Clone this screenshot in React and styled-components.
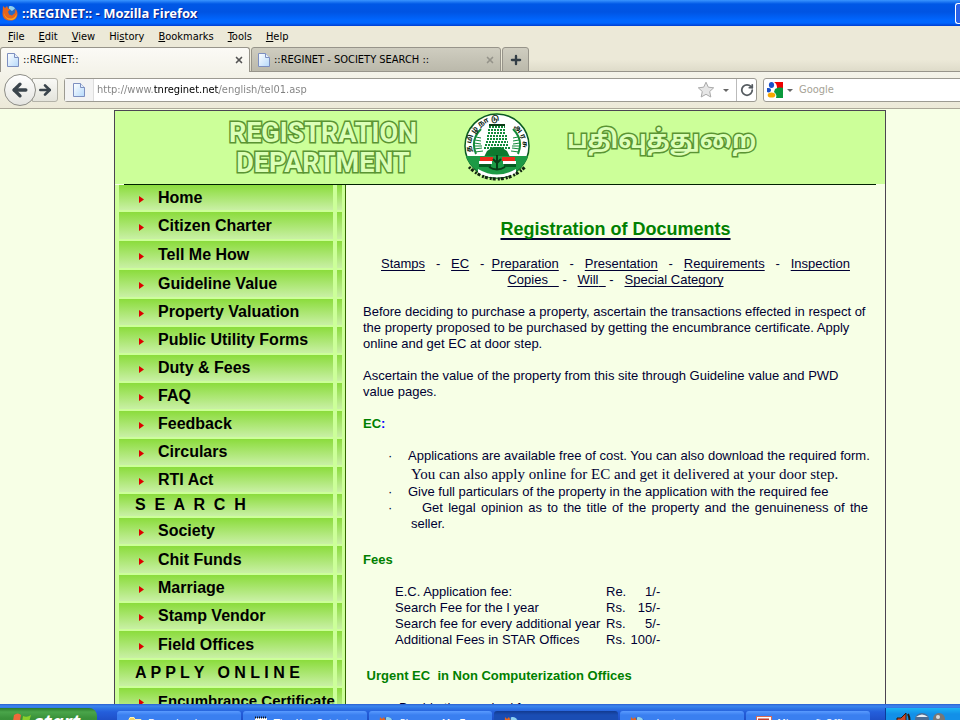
import React from "react";
import styled, { createGlobalStyle } from "styled-components";
import { ArrowLeft, ArrowRight, Plus, RotateCw, X } from "lucide-react";

const colors = {
  chrome: "#ece9d8",
  page: "#f7ffe6",
  lime: "#ccff99",
  ink: "#000033",
  green: "#008000",
};

const uiFont = `"DejaVu Sans Condensed", "DejaVu Sans", sans-serif`;

const menus = [
  ["", "F", "ile"],
  ["", "E", "dit"],
  ["", "V", "iew"],
  ["Hi", "s", "tory"],
  ["", "B", "ookmarks"],
  ["", "T", "ools"],
  ["", "H", "elp"],
];

const sidebar = [
  { label: "Home", size: 27 },
  { label: "Citizen Charter", size: 29 },
  { label: "Tell Me How", size: 29 },
  { label: "Guideline Value", size: 29 },
  { label: "Property Valuation", size: 28 },
  { label: "Public Utility Forms", size: 28 },
  { label: "Duty & Fees", size: 28 },
  { label: "FAQ", size: 28 },
  { label: "Feedback", size: 28 },
  { label: "Circulars", size: 28 },
  { label: "RTI Act", size: 27 },
  { label: "S  E  A  R  C  H", size: 24, heading: true },
  { label: "Society", size: 28 },
  { label: "Chit Funds", size: 29 },
  { label: "Marriage", size: 28 },
  { label: "Stamp Vendor", size: 28 },
  { label: "Field Offices", size: 29 },
  { label: "A P P L Y   O N L I N E", size: 28, heading: true },
  { label: "Encumbrance Certificate", size: 28, small: true },
];

const fees = [
  ["E.C. Application fee:", "Re.", "1/-"],
  ["Search Fee for the I year", "Rs.", "15/-"],
  ["Search fee for every additional year", "Rs.", "5/-"],
  ["Additional Fees in STAR Offices", "Rs.", "100/-"],
];

const tasks = [
  { label: "Downloads", icon: "folder" },
  { label: "The Key Set.txt", icon: "note" },
  { label: "Please - My E...", icon: "fox" },
  { label: "", icon: "fox", active: true },
  { label: "shortages", icon: "fox" },
  { label: "Microsoft Office ...", icon: "slides" },
];

const FoxIcon = () => (
  <svg width="16" height="16" viewBox="0 0 16 16">
    <circle cx="8.5" cy="7.5" r="6.5" fill="#2b6cc4" />
    <path d="M7 1.5c2-1 5 0 6 2L10 6 7 4z" fill="#8fd0f0" />
    <path
      d="M1 1l2 2 2-2 1 2.500 2.500 1L6 6.500l1 3 3 1 3-2.500.500-4c2 2 2.500 5 1.500 7.500-1.500 3.500-5 4.500-8 4C2.500 15 .500 12 .500 8.500z"
      fill="#e8641b"
    />
    <path d="M2 8c1 4 4 6 7 5.500 3 0 5-2.500 5.500-5 .500 4-2 6.500-5.500 6.500S2 12 2 8z" fill="#f7a823" />
  </svg>
);

const PageIcon = () => (
  <svg width="14" height="16" viewBox="0 0 14 16">
    <defs>
      <linearGradient id="sheet" x1="0" y1="0" x2="1" y2="1">
        <stop offset="0" stopColor="#ffffff" />
        <stop offset="1" stopColor="#b5d9fb" />
      </linearGradient>
    </defs>
    <path d="M1.500 1.500h7l4 4v9h-11z" fill="url(#sheet)" stroke="#7d8fc0" />
    <path d="M8.500 1.500v4h4" fill="#e4effc" stroke="#7d8fc0" />
  </svg>
);

const StarIcon = () => (
  <svg width="18" height="18" viewBox="0 0 18 18">
    <path
      d="M9 1.200l2.300 5 5.400.600-4 3.700 1.100 5.500L9 13.300 4.200 16l1.100-5.500-4-3.700 5.400-.600z"
      fill="#e6e6e6"
      stroke="#aaa"
    />
  </svg>
);

const GoogleIcon = () => (
  <svg width="16" height="16" viewBox="0 0 16 16">
    <rect width="16" height="16" fill="#fff" />
    <path d="M8 0h8v6h-6C10 3 9 1 7 0z" fill="#ee0000" />
    <path d="M8 7c2-1 4-2 8-1v10H9c1-3 0-4-2-6z" fill="#0a9a3c" />
    <path d="M0 6c2 0 4 0 4 2S2 11 0 10z" fill="#1950c8" />
    <ellipse cx="4.500" cy="3" rx="2.600" ry="3" fill="#1950c8" />
    <ellipse cx="4.500" cy="13" rx="3.800" ry="2.600" fill="#f7a800" />
  </svg>
);

const FolderIcon = () => (
  <svg width="16" height="16" viewBox="0 0 16 16">
    <path d="M2 3.500l1-2h4l1 2h6v10H2z" fill="#f5d565" stroke="#fff3b0" />
  </svg>
);

const NoteIcon = () => (
  <svg width="16" height="16" viewBox="0 0 16 16">
    <rect x="2" y="2" width="12" height="13" fill="#fff" />
    <path d="M2 1.500h12" stroke="#111" strokeWidth="2" strokeDasharray="1 1" />
    <path d="M4 6h8M4 9h8" stroke="#89a" />
  </svg>
);

const SlidesIcon = () => (
  <svg width="16" height="16" viewBox="0 0 16 16">
    <rect x=".5" y=".5" width="15" height="15" fill="#fff" stroke="#d86a55" />
    <path d="M3 3.500h9v8H3z" fill="#fff" stroke="#c33d2c" strokeWidth="2" />
    <path d="M6 9l4-4" stroke="#c33d2c" strokeWidth="2" />
  </svg>
);

const taskIcons = { folder: FolderIcon, note: NoteIcon, fox: FoxIcon, slides: SlidesIcon };

const Emblem = () => (
  <svg width="68" height="68" viewBox="0 0 68 68" role="img" aria-label="Government emblem">
    <defs>
      <path id="ring" d="M9 41A26 26 0 1 1 59 41" />
    </defs>
    <circle cx="34" cy="33" r="32" fill="#fff" stroke="#0b5a22" strokeWidth="1.500" />
    <path d="M18 16q-11 11-5 25M50 16q11 11 5 25" fill="none" stroke="#128a3a" strokeWidth="2" />
    <path
      d="M13 24l5 1M12 27l6 1M11 30l7 1M11 33l8 0M11 36l8-1M12 39l8-1M55 24l-5 1M56 27l-6 1M57 30l-7 1M57 33l-8 0M57 36l-8-1M56 39l-8-1"
      stroke="#128a3a"
    />
    <RingText>
      <textPath href="#ring" startOffset="2">
        த மி ழ் நா டு
      </textPath>
    </RingText>
    <RingText>
      <textPath href="#ring" startOffset="66">
        அ ர சு
      </textPath>
    </RingText>
    <path d="M26 12h16l2 9 4 20H20l4-20z" fill="#fff" />
    <path
      d="M26 14h16M25 17h18M25 20h18M24 23h20M24 26h20M23 29h22M22 32h24M21 35h26"
      stroke="#128a3a"
      strokeWidth="2"
      strokeDasharray="2 1"
    />
    <path d="M26 11h16v2H26z" fill="#0b3a16" />
    <path d="M24 38l6-4h8l6 4 3 6H21z" fill="#0d7a2f" />
    <path d="M3 43h62c-3 11-16 21-31 21S6 54 3 43z" fill="#1c9a45" />
    <path d="M15 56q19 11 38 0v5q-19 7-38 0z" fill="#fff" />
    <path d="M17 44h13v4H17zM39 44h13v4H39z" fill="#ee2a1c" />
    <path d="M16 48h13v3H16zM40 48h13v3H40z" fill="#fff" />
    <path d="M16 51h12v3H16zM41 51h12v3H41z" fill="#075c22" />
    <path d="M34 42v14M30 46l4 4 4-4M26 54q8 5 16 0" stroke="#093d17" strokeWidth="2" fill="none" />
    <path
      d="M6 54q12 12 28 12t28-12"
      fill="none"
      stroke="#112611"
      strokeWidth="3"
      strokeDasharray="2 1 3 2"
    />
  </svg>
);

const App = () => {
  return (
    <Desktop>
      <GlobalStyle />
      <TitleBar>
        <FoxIcon />
        <WindowTitle>::REGINET:: - Mozilla Firefox</WindowTitle>
        <WindowButton aria-label="Minimize" />
      </TitleBar>

      <MenuBar>
        {menus.map(([before, key, after]) => (
          <MenuItem key={key + after}>
            {before}
            <u>{key}</u>
            {after}
          </MenuItem>
        ))}
      </MenuBar>

      <TabStrip>
        <Tab $active>
          <PageIcon />
          <TabTitle>::REGINET::</TabTitle>
          <TabClose aria-label="Close tab" $active>
            <X size={10} strokeWidth={4} />
          </TabClose>
        </Tab>
        <Tab>
          <PageIcon />
          <TabTitle>::REGINET - SOCIETY SEARCH ::</TabTitle>
          <TabClose aria-label="Close tab">
            <X size={10} strokeWidth={4} />
          </TabClose>
        </Tab>
        <NewTab aria-label="New tab">
          <Plus size={14} strokeWidth={4} />
        </NewTab>
      </TabStrip>

      <NavBar>
        <BackButton aria-label="Back">
          <ArrowLeft size={20} strokeWidth={4} />
        </BackButton>
        <ForwardButton aria-label="Forward">
          <ArrowRight size={16} strokeWidth={4} />
        </ForwardButton>
        <Field $grow>
          <Identity>
            <PageIcon />
          </Identity>
          <UrlInput aria-label="Address" defaultValue="http://www.tnreginet.net/english/tel01.asp" />
          <FieldButton aria-label="Bookmark this page">
            <StarIcon />
          </FieldButton>
          <FieldButton aria-label="Show history">
            <Caret />
          </FieldButton>
          <ReloadButton aria-label="Reload">
            <RotateCw size={14} strokeWidth={3} />
          </ReloadButton>
        </Field>
        <Field>
          <EngineButton aria-label="Search engine">
            <GoogleIcon />
            <Caret />
          </EngineButton>
          <SearchInput aria-label="Search" placeholder="Google" />
        </Field>
      </NavBar>

      <Page>
        <Sheet>
          <Banner>
            <EnglishName>
              REGISTRATION
              <br />
              DEPARTMENT
            </EnglishName>
            <Emblem />
            <TamilName lang="ta">பதிவுத்துறை</TamilName>
          </Banner>
          <Rule />
          <Columns>
            <SideNav>
              {sidebar.map(({ label, size, heading, small }) => (
                <SideRow key={label} $size={size} $small={small}>
                  {heading ? (
                    <SideHeading>{label}</SideHeading>
                  ) : (
                    <SideLink href="#">
                      <Bullet width="5" height="7" viewBox="0 0 5 7">
                        <path d="M0 0l5 3.500L0 7z" fill="#dd0000" />
                      </Bullet>
                      {label}
                    </SideLink>
                  )}
                  <Strip />
                </SideRow>
              ))}
            </SideNav>

            <Content>
              <Title>Registration of Documents</Title>
              <Topics>
                <a href="#stamps">Stamps</a>
                {"   -   "}
                <a href="#ec">EC</a>
                {"   -  "}
                <a href="#preparation">Preparation</a>
                {"   -   "}
                <a href="#presentation">Presentation</a>
                {"   -   "}
                <a href="#requirements">Requirements</a>
                {"   -   "}
                <a href="#inspection">
                  Inspection{"\n"}Copies{"   "}
                </a>
                {" -   "}
                <a href="#will">Will{"  "}</a>
                {" -   "}
                <a href="#special">Special Category</a>
              </Topics>
              <Para>
                Before deciding to purchase a property, ascertain the transactions effected in respect of
                <br />
                the property proposed to be purchased by getting the encumbrance certificate. Apply
                <br />
                online and get EC at door step.
              </Para>
              <Para>
                Ascertain the value of the property from this site through Guideline value and PWD
                <br />
                value pages.
              </Para>
              <Subhead>
                EC<Colon>:</Colon>
              </Subhead>
              <Points>
                <Point>
                  Applications are available free of cost. You can also download the required form.
                  <Serif>You can also apply online for EC and get it delivered at your door step.</Serif>
                </Point>
                <Point>Give full particulars of the property in the application with the required fee</Point>
                <Point $justify>
                  Get legal opinion as to the title of the property and the genuineness of the seller.
                </Point>
              </Points>
              <Subhead>Fees</Subhead>
              <FeeTable>
                <tbody>
                  {fees.map(([name, unit, amount]) => (
                    <tr key={name}>
                      <td>{name}</td>
                      <td>{unit}</td>
                      <Amount>{amount}</Amount>
                    </tr>
                  ))}
                </tbody>
              </FeeTable>
              <Subhead>{" Urgent EC  in Non Computerization Offices"}</Subhead>
              <Indented>Double the required fee.</Indented>
            </Content>
          </Columns>
        </Sheet>
      </Page>

      <TaskBar>
        <StartButton>
          <svg width="20" height="18" viewBox="0 0 20 18">
            <path d="M2 2q4-3 7 0L8 8Q4 6 1 8z" fill="#f0693a" />
            <path d="M11 3q4 2 8-1l-2 7q-4 2-7 0z" fill="#8ad02a" />
            <path d="M1 10q3-2 7 0l-1 6q-3-2-7 0z" fill="#5a9cf5" />
            <path d="M10 11q3 2 7 0l-2 6q-3 2-6 0z" fill="#fbd038" />
          </svg>
          start
        </StartButton>
        <Tasks>
          {tasks.map(({ label, icon, active }, i) => {
            const Icon = taskIcons[icon];
            return (
              <Task key={i} $active={active}>
                <Icon />
                <TaskLabel>{label}</TaskLabel>
              </Task>
            );
          })}
        </Tasks>
        <Tray>
          <svg width="50" height="16" viewBox="0 0 50 16">
            <path d="M1 6h4l5-5v14l-5-5H1z" fill="#c9492c" stroke="#2b1a10" />
            <path d="M12 2q3 6 0 11" fill="none" stroke="#2b1a10" strokeWidth="2" />
            <ellipse cx="26" cy="7" rx="7" ry="6" fill="#4c6d94" />
            <path d="M20 5q6-5 12 0z" fill="#e8eef5" />
            <circle cx="43" cy="7" r="6" fill="#777" />
            <circle cx="42" cy="5" r="2" fill="#ddd" />
          </svg>
        </Tray>
      </TaskBar>
    </Desktop>
  );
};

export default App;

const GlobalStyle = createGlobalStyle`
  * {
    box-sizing: border-box;
  }
  body {
    margin: 0;
    overflow: hidden;
    background: ${colors.page};
    font-family: "Liberation Sans", Arial, sans-serif;
  }
  button, input {
    font: inherit;
    padding: 0;
    margin: 0;
    border: 0;
    background: none;
    outline: 0;
  }
  svg {
    flex: none;
    display: block;
  }
`;

const Desktop = styled.div`
  height: 100vh;
  display: flex;
  flex-direction: column;
  overflow: hidden;
  font-size: 13px;
  line-height: 16px;
`;

const TitleBar = styled.header`
  flex: none;
  height: 26px;
  display: flex;
  align-items: center;
  gap: 4px;
  padding-left: 2px;
  background: linear-gradient(#3a95ff 0, #0058e6 4px, #0054e3 12px, #0066ff 20px, #0066ff 23px, #003dd0 26px);
`;

const WindowTitle = styled.h1`
  flex: 1;
  margin: 0;
  color: #fff;
  font: bold 13px/16px "Noto Sans", sans-serif;
  text-shadow: 1px 1px 1px #0a1883;
`;

const WindowButton = styled.button`
  width: 5px;
  height: 21px;
  border: 1px solid #fff;
  border-right: 0;
  border-radius: 3px 0 0 3px;
  background: #2b62e8;
`;

const MenuBar = styled.nav`
  flex: none;
  height: 21px;
  display: flex;
  align-items: center;
  gap: 14px;
  padding-left: 8px;
  background: ${colors.chrome};
  font-family: ${uiFont};
  font-size: 11px;
`;

const MenuItem = styled.button`
  color: #000;
`;

const TabStrip = styled.div`
  flex: none;
  height: 25px;
  display: flex;
  gap: 1px;
  background: linear-gradient(${colors.chrome} 50%, #dddac8);
  box-shadow: inset 0 -1px #97948a;
  font-family: ${uiFont};
  font-size: 11px;
`;

const Tab = styled.div`
  flex: 0 1 250px;
  display: flex;
  align-items: center;
  gap: 3px;
  padding: 0 5px;
  border: 1px solid #97948a;
  border-bottom-width: ${(props) => (props.$active ? "0" : "1px")};
  border-radius: 3px 3px 0 0;
  background: ${(props) =>
    props.$active ? "linear-gradient(#fbfaf6, #f4f3ea)" : "linear-gradient(#cfcdc0, #bbb9ab)"};
`;

const TabTitle = styled.span`
  flex: 1;
  white-space: nowrap;
`;

const TabClose = styled.button`
  color: ${(props) => (props.$active ? "#555" : "#95938a")};
`;

const NewTab = styled.button`
  width: 27px;
  display: flex;
  align-items: center;
  justify-content: center;
  border: 1px solid #97948a;
  border-radius: 3px 3px 0 0;
  background: linear-gradient(#cfcdc0, #bbb9ab);
  color: #333e46;
`;

const NavBar = styled.div`
  flex: none;
  height: 37px;
  display: flex;
  align-items: center;
  padding-left: 4px;
  background: linear-gradient(#f4f3ea, ${colors.chrome});
  border-bottom: 1px solid #aca899;
  font-family: ${uiFont};
  font-size: 11px;
`;

const BackButton = styled.button`
  z-index: 1;
  width: 32px;
  height: 32px;
  display: flex;
  align-items: center;
  justify-content: center;
  border: 1px solid #8c8c86;
  border-radius: 50%;
  background: linear-gradient(#fff, #e4e4e0);
  color: #3a444c;
`;

const ForwardButton = styled.button`
  width: 26px;
  height: 24px;
  margin: 0 6px 0 -4px;
  display: flex;
  align-items: center;
  justify-content: center;
  border: 1px solid #b3b2a8;
  border-radius: 0 3px 3px 0;
  background: linear-gradient(#f9f9f6, #e4e4dc);
  color: #3a444c;
`;

const Field = styled.div`
  flex: ${(props) => (props.$grow ? "1 1 0" : "0 0 203px")};
  height: 24px;
  display: flex;
  align-items: stretch;
  margin-right: ${(props) => (props.$grow ? "6px" : "-6px")};
  border: 1px solid #9c9a92;
  border-radius: 3px;
  background: #fff;
`;

const Identity = styled.div`
  width: 29px;
  display: flex;
  align-items: center;
  justify-content: center;
  border-right: 1px solid #ddd;
  background: #f3f3f3;
`;

const UrlInput = styled.input`
  flex: 1;
  min-width: 0;
  margin-left: 3px;
  background: linear-gradient(90deg, #808080 57px, #000 57px, #000 122px, #808080 122px);
  background-clip: text;
  -webkit-text-fill-color: transparent;
`;

const FieldButton = styled.button`
  width: 20px;
  display: flex;
  align-items: center;
  justify-content: center;
`;

const Caret = styled.span`
  border: 3px solid transparent;
  border-top-color: #666;
  border-bottom: 0;
`;

const ReloadButton = styled(FieldButton)`
  border-left: 1px solid #bbb;
  color: #555b60;
`;

const EngineButton = styled.button`
  width: 32px;
  display: flex;
  align-items: center;
  justify-content: center;
  gap: 4px;
`;

const SearchInput = styled.input`
  flex: 1;
  min-width: 0;
  padding-left: 3px;
  &::placeholder {
    color: #a5a295;
  }
`;

const Page = styled.main`
  flex: 1;
  min-height: 0;
  display: flex;
  overflow: hidden;
  padding: 1px 74px 0 114px;
  background: ${colors.page};
`;

const Sheet = styled.div`
  flex: 1;
  min-width: 0;
  border: 1px solid #4c4452;
  border-bottom: 0;
`;

const Banner = styled.div`
  height: 73px;
  display: flex;
  align-items: flex-start;
  gap: 36px;
  padding-left: 104px;
  background: ${colors.lime};
  svg {
    margin-top: 2px;
  }
`;

const EnglishName = styled.h2`
  width: 208px;
  margin: 7px 0 0;
  text-align: center;
  white-space: nowrap;
  color: #dcffb8;
  font: bold 27px/30px Roboto, "Liberation Sans", sans-serif;
  -webkit-text-stroke: 3px #5a9433;
  paint-order: stroke fill;
`;

const TamilName = styled.h2`
  margin: 14px 0 0;
  color: #dcffb8;
  font: bold 25px/34px "Noto Sans Tamil", "Noto Sans", sans-serif;
  -webkit-text-stroke: 3px #5a9433;
  paint-order: stroke fill;
`;

const RingText = styled.text`
  font: bold 7px "Noto Sans Tamil", "Noto Sans", sans-serif;
  fill: #0b2412;
`;

const Rule = styled.div`
  height: 1px;
  margin: 0 9px;
  background: #002200;
`;

const Columns = styled.div`
  display: flex;
  align-items: flex-start;
`;

const SideNav = styled.nav`
  flex: none;
  width: 231px;
  padding: 0 3px 0 4px;
  border-right: 1px solid #336600;
  background: ${colors.lime};
`;

const SideRow = styled.div`
  height: ${(props) => props.$size}px;
  display: flex;
  gap: 4px;
  border-bottom: 2px solid ${colors.lime};
  font-weight: bold;
  font-size: ${(props) => (props.$small ? "15px" : "16px")};
  line-height: 18px;
  white-space: pre;
`;

const barFill = "linear-gradient(#8bdc3c, #c9f0a5)";

const SideLink = styled.a`
  flex: 1;
  min-width: 0;
  display: flex;
  align-items: center;
  gap: 14px;
  padding-left: 20px;
  background: ${barFill};
  color: #000;
  text-decoration: none;
`;

const SideHeading = styled.span`
  flex: 1;
  display: flex;
  align-items: center;
  padding-left: 16px;
  background: ${barFill};
`;

const Bullet = styled.svg`
  margin-top: 3px;
`;

const Strip = styled.span`
  width: 5px;
  background: ${barFill};
`;

const Content = styled.article`
  flex: 1;
  min-width: 0;
  padding: 34px 17px 0;
  color: ${colors.ink};
`;

const Title = styled.h2`
  margin: 0 0 17px;
  text-align: center;
  color: ${colors.green};
  font-size: 18px;
  line-height: 20px;
  text-decoration: underline 2px ${colors.ink};
  text-underline-offset: 3px;
  text-decoration-skip-ink: none;
`;

const Topics = styled.p`
  margin: 0 0 16px;
  text-align: center;
  white-space: pre-wrap;
  a {
    color: inherit;
    text-decoration-skip-ink: none;
    text-underline-offset: 2px;
  }
`;

const Para = styled.p`
  margin: 0 0 16px;
  white-space: nowrap;
`;

const Subhead = styled.h3`
  margin: 0 0 16px;
  color: ${colors.green};
  font-size: 13px;
  white-space: pre;
`;

const Colon = styled.span`
  color: #0000ff;
`;

const Points = styled.ul`
  margin: 0 0 20px;
  padding: 0 0 0 48px;
  list-style: none;
`;

const Point = styled.li`
  text-indent: -3px;
  text-align: ${(props) => (props.$justify ? "justify" : "left")};
  white-space: ${(props) => (props.$justify ? "normal" : "nowrap")};
  &::before {
    content: "·";
    display: inline-block;
    width: ${(props) => (props.$justify ? "34px" : "20px")};
    margin-left: -20px;
    text-indent: 0;
  }
`;

const Serif = styled.span`
  display: block;
  text-indent: 0;
  font: 15px/20px "Liberation Serif", "Times New Roman", serif;
`;

const FeeTable = styled.table`
  margin: 0 0 20px 32px;
  border-spacing: 0;
  td {
    padding: 0;
  }
  td:first-child {
    width: 211px;
  }
`;

const Amount = styled.td`
  width: 34px;
  text-align: right;
`;

const Indented = styled.p`
  margin: 0 0 0 36px;
`;

const TaskBar = styled.footer`
  flex: none;
  height: 16px;
  display: flex;
  align-items: flex-start;
  overflow: hidden;
  background: linear-gradient(#2a5fcf 0, #3c86ee 2px, #3078e6 4px, #245edb 8px, #1f50c8 16px);
  font-family: ${uiFont};
  font-size: 11px;
`;

const StartButton = styled.button`
  width: 97px;
  height: 28px;
  margin: 4px 20px 0 0;
  display: flex;
  align-items: center;
  gap: 2px;
  padding-left: 12px;
  border-radius: 0 8px 8px 0;
  background: linear-gradient(#2a7a2a, #4aa54a 4px, #3a923a 10px, #348a34);
  color: #fff;
  font: italic bold 20px/20px "Noto Sans", sans-serif;
`;

const Tasks = styled.div`
  flex: 1;
  min-width: 0;
  display: flex;
  gap: 2px;
  padding: 7px 15px 0 0;
`;

const Task = styled.button`
  flex: 1 1 0;
  min-width: 0;
  height: 26px;
  display: flex;
  align-items: center;
  gap: 5px;
  padding: 0 6px 0 10px;
  border-radius: 3px;
  background: ${(props) =>
    props.$active ? "linear-gradient(#123a90, #1a4db4 4px)" : "linear-gradient(#5a9bff, #3a7ff0 4px)"};
  color: #fff;
`;

const TaskLabel = styled.span`
  min-width: 0;
  white-space: nowrap;
`;

const Tray = styled.div`
  flex: none;
  width: 75px;
  height: 28px;
  margin-top: 4px;
  padding: 4px 0 0 10px;
  border-left: 1px solid #0a3a9a;
  background: linear-gradient(#1cb4f4, #1290e8 6px);
`;
